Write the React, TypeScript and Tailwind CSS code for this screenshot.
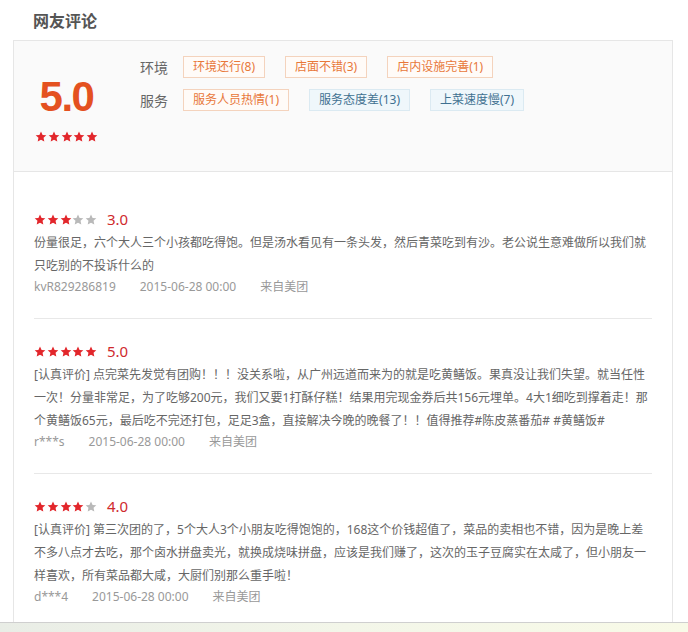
import React from "react";

type Review = {
  score: number;
  lines: string[];
  user: string;
  time: string;
  source: string;
};

const reviews: Review[] = [
  {
    score: 3,
    lines: [
      "份量很足，六个大人三个小孩都吃得饱。但是汤水看见有一条头发，然后青菜吃到有沙。老公说生意难做所以我们就",
      "只吃别的不投诉什么的",
    ],
    user: "kvR829286819",
    time: "2015-06-28 00:00",
    source: "来自美团",
  },
  {
    score: 5,
    lines: [
      "[认真评价] 点完菜先发觉有团购！！！没关系啦，从广州远道而来为的就是吃黄鳝饭。果真没让我们失望。就当任性",
      "一次！分量非常足，为了吃够200元，我们又要1打酥仔糕！结果用完现金券后共156元埋单。4大1细吃到撑着走！那",
      "个黄鳝饭65元，最后吃不完还打包，足足3盒，直接解决今晚的晚餐了！！值得推荐#陈皮蒸番茄# #黄鳝饭#",
    ],
    user: "r***s",
    time: "2015-06-28 00:00",
    source: "来自美团",
  },
  {
    score: 4,
    lines: [
      "[认真评价] 第三次团的了，5个大人3个小朋友吃得饱饱的，168这个价钱超值了，菜品的卖相也不错，因为是晚上差",
      "不多八点才去吃，那个卤水拼盘卖光，就换成烧味拼盘，应该是我们赚了，这次的玉子豆腐实在太咸了，但小朋友一",
      "样喜欢，所有菜品都大咸，大厨们别那么重手啦！",
    ],
    user: "d***4",
    time: "2015-06-28 00:00",
    source: "来自美团",
  },
];

const tagRows = [
  {
    label: "环境",
    tags: [
      { text: "环境还行(8)", good: true },
      { text: "店面不错(3)", good: true },
      { text: "店内设施完善(1)", good: true },
    ],
  },
  {
    label: "服务",
    tags: [
      { text: "服务人员热情(1)", good: true },
      { text: "服务态度差(13)", good: false },
      { text: "上菜速度慢(7)", good: false },
    ],
  },
];

function Star({ on }: { on: boolean }) {
  return (
    <svg viewBox="0 0 24 24" className="w-3 h-3 shrink-0">
      <path
        d="M12 1l3.2 6.8 7.4.9-5.5 5 1.5 7.3L12 17.4l-6.6 3.6 1.5-7.3-5.5-5 7.4-.9z"
        fill={on ? "#e2262b" : "#b9b9b9"}
      />
    </svg>
  );
}

function Stars({ score }: { score: number }) {
  return (
    <div className="flex items-center gap-[0.75px]">
      {[1, 2, 3, 4, 5].map((i) => (
        <Star key={i} on={i <= score} />
      ))}
    </div>
  );
}

export default function App() {
  return (
    <div className="w-[688px] h-[632px] overflow-hidden bg-white flex flex-col font-['Noto_Sans','Noto_Sans_CJK_SC',sans-serif]">
      <div className="pt-[8px] pl-[33px] text-[16px] leading-[24px] font-bold text-[#555] font-['Noto_Sans_CJK_SC',sans-serif]">
        网友评论
      </div>

      <div className="mt-[8px] ml-[13px] w-[660px] flex-1 min-h-0 overflow-hidden border border-b-0 border-[#e6e6e6] flex flex-col">
        {/* score summary */}
        <div className="h-[131px] shrink-0 bg-[#fafafa] border-b border-[#e6e6e6] flex">
          <div className="w-[105px] pt-[35px] flex flex-col items-center">
            <div className="text-[42px] leading-[42px] font-bold tracking-[-1.5px] text-[#e4511f] font-['Liberation_Sans',sans-serif]">
              5.0
            </div>
            <div className="mt-[13px]">
              <Stars score={5} />
            </div>
          </div>

          <div className="ml-[21px] pt-[15px] flex flex-col gap-[11px]">
            {tagRows.map((row) => (
              <div key={row.label} className="flex items-center h-[22px]">
                <span className="w-[43px] text-[14px] text-[#666]">{row.label}</span>
                <div className="flex gap-[20px]">
                  {row.tags.map((t) => (
                    <span
                      key={t.text}
                      className={
                        t.good
                          ? "h-[22px] px-[9px] flex items-center text-[12px] border border-[#f4d3bd] bg-[#fffbf8] text-[#e8783a]"
                          : "h-[22px] px-[9px] flex items-center text-[12px] border border-[#dbeaf2] bg-[#eff7fb] text-[#3f7191]"
                      }
                    >
                      {t.text}
                    </span>
                  ))}
                </div>
              </div>
            ))}
          </div>
        </div>

        {/* review list */}
        <div className="pt-[15px] px-[20px]">
          {reviews.map((r, idx) => (
            <div
              key={r.user}
              className={
                idx < reviews.length - 1
                  ? "pt-[21px] pb-[21px] border-b border-[#e8e8e8]"
                  : "pt-[21px] pb-[21px]"
              }
            >
              <div className="h-[23px] flex items-center gap-[10px]">
                <Stars score={r.score} />
                <span className="text-[15px] text-[#cf2a2d]">{r.score}.0</span>
              </div>
              <p className="text-[12px] leading-[23px] text-[#666] whitespace-nowrap">
                {r.lines.map((l, i) => (
                  <React.Fragment key={i}>
                    {i > 0 && <br />}
                    {l}
                  </React.Fragment>
                ))}
              </p>
              <div className="flex gap-6 text-[12px] leading-[20px] text-[#999]">
                <span>{r.user}</span>
                <span>{r.time}</span>
                <span>{r.source}</span>
              </div>
            </div>
          ))}
        </div>
      </div>

      {/* bottom strip */}
      <div className="h-[10px] shrink-0 border-t border-[#cfcfcf] bg-gradient-to-r from-[#e9ede6] via-[#f3f6e9] to-[#f8fae7]" />
    </div>
  );
}
